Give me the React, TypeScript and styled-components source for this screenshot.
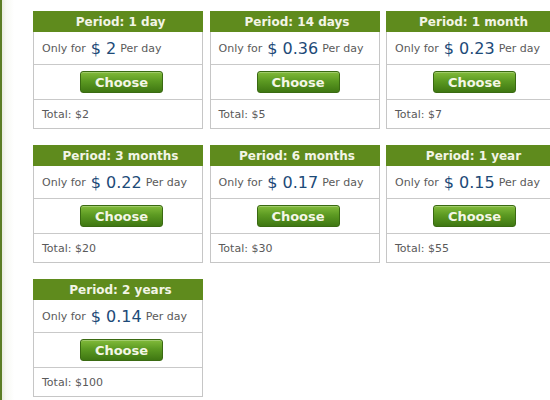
import React from "react";
import styled, { createGlobalStyle } from "styled-components";

const Global = createGlobalStyle`
  html, body { margin: 0; padding: 0; }
  body {
    width: 550px;
    height: 400px;
    overflow: hidden;
    background: linear-gradient(to right, #5b7d24 0, #5b7d24 2px, #e9ecdf 2px, #f7f8f3 6px, #ffffff 14px);
    font-family: "DejaVu Sans", Verdana, sans-serif;
  }
`;

const Page = styled.div`
  padding: 11px 0 0 33px;
  display: grid;
  grid-template-columns: repeat(3, 170px);
  column-gap: 6.5px;
  row-gap: 16px;
  width: 600px;
`;

const Card = styled.div`
  border: 1px solid #c6c6c6;
  border-top: none;
  background: #fff;
  display: flex;
  flex-direction: column;
`;

const Header = styled.div`
  height: 21px;
  background: #5f8b1d;
  color: #f3f5e6;
  font-weight: bold;
  font-size: 12px;
  display: flex;
  align-items: center;
  justify-content: center;
  margin: 0 -1px;
  padding-left: 5px;
`;

const PriceRow = styled.div`
  height: 32px;
  border-bottom: 1px solid #c9c9c9;
  display: flex;
  align-items: center;
  padding-left: 8px;
  font-size: 11px;
  color: #5a5a5a;
  white-space: nowrap;
`;

const Amount = styled.span`
  font-size: 16px;
  color: #1d4a78;
  margin: 0 4px 0 5px;
`;

const ButtonRow = styled.div`
  height: 34px;
  border-bottom: 1px solid #c9c9c9;
  display: flex;
  align-items: center;
  justify-content: center;
  padding-left: 7px;
`;

const ChooseButton = styled.button`
  width: 83px;
  height: 22px;
  border: 1px solid #3a6a12;
  border-radius: 3px;
  background: linear-gradient(to bottom, #82bb3a 0%, #5c9a22 45%, #3f7712 100%);
  color: #f4f6e6;
  font-family: "DejaVu Sans", Verdana, sans-serif;
  font-weight: bold;
  font-size: 13px;
  padding: 0;
  cursor: pointer;
  box-shadow: inset 0 1px 0 rgba(255,255,255,0.25);
`;

const TotalRow = styled.div`
  height: 28px;
  display: flex;
  align-items: center;
  padding-left: 8px;
  font-size: 11px;
  color: #5a5a5a;
`;

const plans = [
  { period: "1 day", price: "2", total: "$2" },
  { period: "14 days", price: "0.36", total: "$5" },
  { period: "1 month", price: "0.23", total: "$7" },
  { period: "3 months", price: "0.22", total: "$20" },
  { period: "6 months", price: "0.17", total: "$30" },
  { period: "1 year", price: "0.15", total: "$55" },
  { period: "2 years", price: "0.14", total: "$100" },
];

export default function App() {
  return (
    <>
      <Global />
      <Page>
        {plans.map((p) => (
          <Card key={p.period}>
            <Header>Period: {p.period}</Header>
            <PriceRow>
              Only for<Amount>$ {p.price}</Amount>Per day
            </PriceRow>
            <ButtonRow>
              <ChooseButton>Choose</ChooseButton>
            </ButtonRow>
            <TotalRow>Total: {p.total}</TotalRow>
          </Card>
        ))}
      </Page>
    </>
  );
}
